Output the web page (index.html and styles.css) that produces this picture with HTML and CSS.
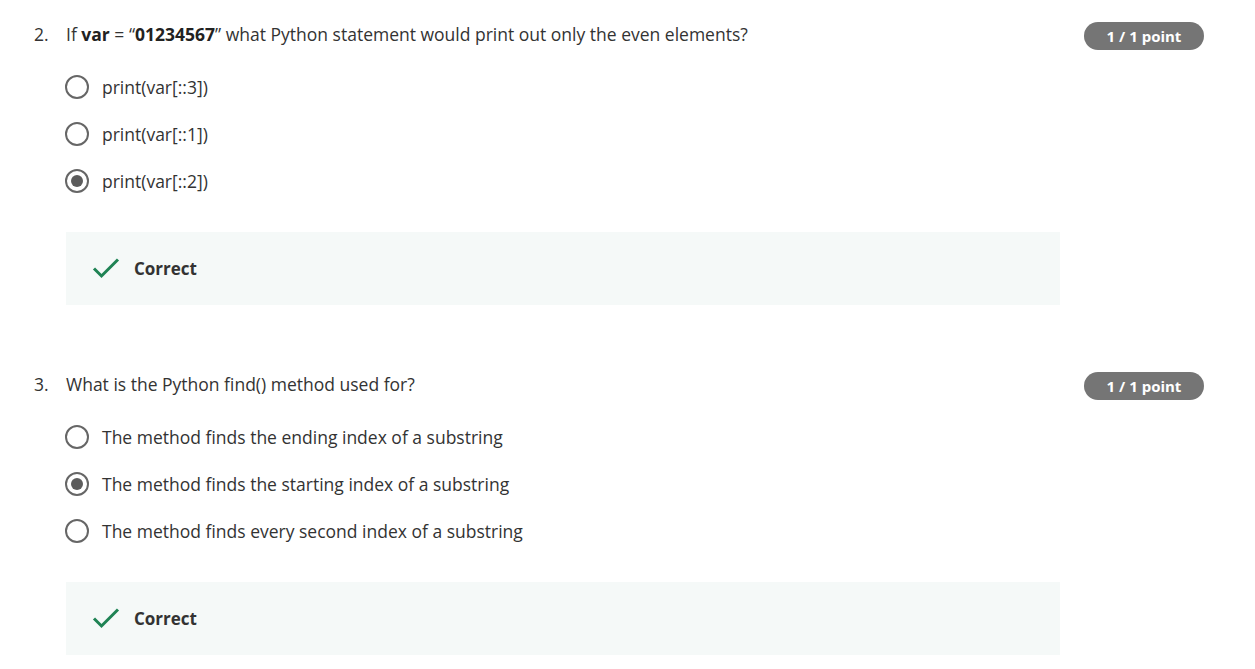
FILE: index.html
```html
<!DOCTYPE html>
<html>
<head>
<meta charset="utf-8">
<link rel="stylesheet" href="styles.css">
</head>
<body>
<div class="page">
  <section class="question q2">
    <div class="q-head">
      <div class="q-num">2.</div>
      <div class="q-text">If <b>var</b> = “<b>01234567</b>” what Python statement would print out only the even elements?</div>
      <div class="badge">1 / 1 point</div>
    </div>
    <div class="options">
      <div class="option"><span class="radio"></span><span class="opt-text">print(var[::3])</span></div>
      <div class="option"><span class="radio"></span><span class="opt-text">print(var[::1])</span></div>
      <div class="option"><span class="radio checked"></span><span class="opt-text">print(var[::2])</span></div>
    </div>
    <div class="feedback">
      <svg class="check" width="28" height="22" viewBox="0 0 28 22"><path d="M2 11.5 L9.5 19 L26 2.5" fill="none" stroke="#1f8354" stroke-width="3"/></svg>
      <span class="fb-text">Correct</span>
    </div>
  </section>
  <section class="question q3">
    <div class="q-head">
      <div class="q-num">3.</div>
      <div class="q-text">What is the Python find() method used for?</div>
      <div class="badge">1 / 1 point</div>
    </div>
    <div class="options">
      <div class="option"><span class="radio"></span><span class="opt-text">The method finds the ending index of a substring</span></div>
      <div class="option"><span class="radio checked"></span><span class="opt-text">The method finds the starting index of a substring</span></div>
      <div class="option"><span class="radio"></span><span class="opt-text">The method finds every second index of a substring</span></div>
    </div>
    <div class="feedback">
      <svg class="check" width="28" height="22" viewBox="0 0 28 22"><path d="M2 11.5 L9.5 19 L26 2.5" fill="none" stroke="#1f8354" stroke-width="3"/></svg>
      <span class="fb-text">Correct</span>
    </div>
  </section>
</div>
</body>
</html>
```
FILE: styles.css
```css
html, body {
  margin: 0;
  padding: 0;
  background: #ffffff;
}
body {
  font-family: "Open Sans", "Liberation Sans", sans-serif;
  color: #1f1f1f;
  font-size: 17.5px;
}
.page {
  padding: 21px 51px 0 34px;
}
.question {
  display: flex;
  flex-direction: column;
}
.q3 {
  margin-top: 66px;
}
.q-head {
  display: flex;
  align-items: center;
  height: 28px;
}
.q-num {
  width: 32px;
  color: #333;
  margin-top: -3px;
}
.q-text {
  flex: 1;
  color: #333;
  margin-top: -3px;
}
.q-text b {
  font-weight: 700;
  color: #222;
}
.badge {
  width: 120px;
  height: 28px;
  border-radius: 14px;
  background: #757575;
  color: #fff;
  font-size: 15px;
  font-weight: 700;
  display: flex;
  align-items: center;
  justify-content: center;
  margin-top: 2px;
}
.options {
  display: flex;
  flex-direction: column;
  gap: 21px;
  padding-left: 31px;
  margin-top: 25px;
}
.option {
  display: flex;
  align-items: center;
  height: 26px;
}
.radio {
  width: 20px;
  height: 20px;
  border: 2px solid #666;
  border-radius: 50%;
  box-sizing: content-box;
  display: flex;
  align-items: center;
  justify-content: center;
  margin-right: 13px;
  flex: none;
}
.radio.checked::after {
  content: "";
  width: 12px;
  height: 12px;
  border-radius: 50%;
  background: #5c5c5c;
}
.opt-text {
  color: #333;
}
.feedback {
  margin-top: 38px;
  margin-left: 32px;
  width: 994px;
  height: 73px;
  background: #f5f9f8;
  display: flex;
  align-items: center;
  padding-left: 26px;
  box-sizing: border-box;
}
.check {
  margin-right: 14px;
  margin-top: -2px;
}
.fb-text {
  font-weight: 700;
  color: #333;
  font-size: 17px;
}
```
